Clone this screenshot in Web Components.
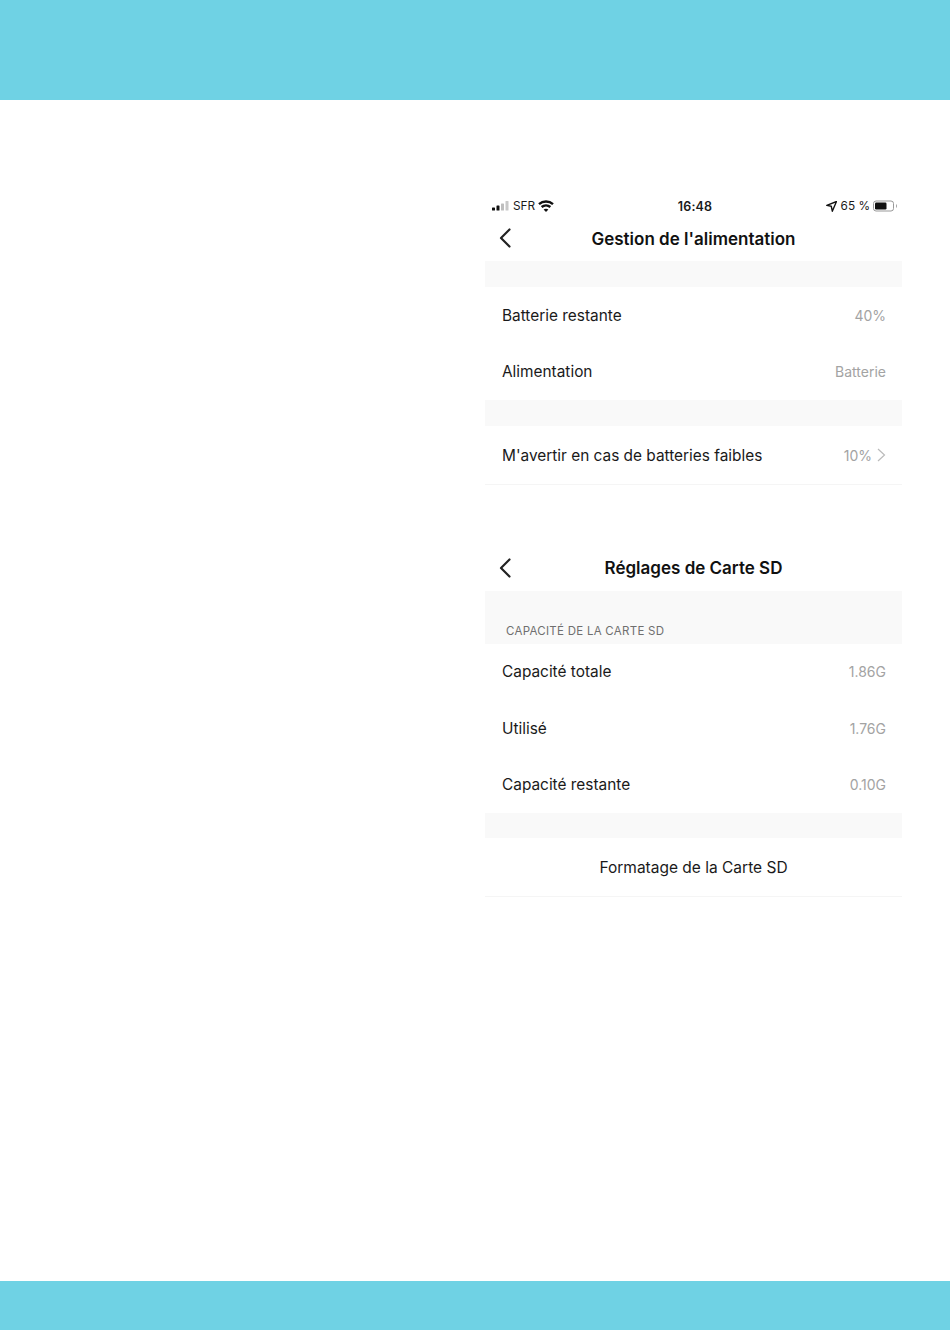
<!DOCTYPE html>
<html lang="fr"><head><meta charset="utf-8"><title>Réglages</title>
<style>html,body{margin:0;padding:0;background:#fff}body{font-family:Inter,"Liberation Sans",sans-serif}</style>
</head><body>
<template id="t-page"><style>
:host{display:grid;grid-template-rows:100px 1181px 49px;width:950px;height:1330px;background:#fff}
.band{background:#6fd2e4}
main{padding:97px 48px 0 485px;display:flex;flex-direction:column}
</style><div class="band"></div><main><slot></slot></main><div class="band"></div></template>

<template id="t-status"><style>
:host{display:grid;grid-template-columns:1fr auto 1fr;align-items:center;height:18px;padding:0 4px 0 7px;font-size:11.8px;color:#1a1a1a}
.l,.r{display:flex;align-items:center}.l{gap:3px}.r{justify-content:flex-end;gap:3px}
.t{font-weight:600;font-size:12.5px;letter-spacing:.15px}
svg{display:block}
</style>
<div class="l"><svg width="18" height="10" viewBox="0 0 18 10"><rect x="0" y="6.5" width="3" height="3" rx=".6" fill="#111"/><rect x="4.5" y="4.5" width="3" height="5" rx=".6" fill="#111"/><rect x="9" y="2.5" width="3" height="7" rx=".6" fill="#bdbdbd"/><rect x="13.5" y="0" width="3" height="9.5" rx=".6" fill="#c8c8c8"/></svg><span>SFR</span><svg width="16" height="12" viewBox="0 0 16 12" fill="none" stroke="#111" stroke-width="2.4"><path d="M1 4.2C5 .6 11 .6 15 4.2"/><path d="M3.6 7c2.6-2.2 6.2-2.2 8.8 0"/><path d="M8 12 5.6 9.4c1.4-1 3.4-1 4.8 0z" fill="#111" stroke="none"/></svg></div>
<div class="t">16:48</div>
<div class="r"><svg width="11" height="11" viewBox="0 0 11 11"><path d="M10.5.5 .8 4.4l4.5.9 1 4.9z" fill="none" stroke="#111" stroke-width="1.4" stroke-linejoin="round"/></svg><span style="margin-left:1px">65 %</span><svg width="25" height="12" viewBox="0 0 25 12"><rect x=".5" y="1" width="20" height="10" rx="2.5" fill="#fff" stroke="#999"/><rect x="2" y="2.5" width="11.5" height="7" rx="1.2" fill="#111"/><rect x="23" y="4.5" width="1" height="3" fill="#aaa"/></svg></div></template>

<template id="t-nav"><style>
:host{display:grid;grid-template-columns:44px 1fr 44px;align-items:center;height:46px;font-weight:600;font-size:17px;color:#111;text-align:center}
svg{display:block;margin-left:14px}
.x{padding-top:1px}
</style><svg width="12" height="20" viewBox="0 0 12 20" fill="none" stroke="#222" stroke-width="2.2" stroke-linecap="round" stroke-linejoin="round"><path d="M10.5 1.5 2 10l8.5 8.5"/></svg><div class="x"><slot></slot></div><span></span></template>

<template id="t-gap"><style>
:host{display:flex;align-items:flex-end;background:#f9f9f9;height:var(--h,26px);box-sizing:border-box;font-size:11.5px;letter-spacing:.27px;color:#6f6f6f;padding:0 0 6px 21px}
</style><slot></slot></template>

<template id="t-row"><style>
:host{display:flex;justify-content:space-between;align-items:center;height:var(--h,56.4px);box-sizing:border-box;padding:var(--pt,0) 16px 0 17px;font-size:15.4px;color:#1a1a1a}
.v{display:flex;align-items:center;gap:5px;font-size:14px;color:#a3a3a3}
</style><span><slot></slot></span><span class="v"><slot name="value"></slot></span></template>

<template id="t-action"><style>
:host{display:flex;justify-content:center;align-items:center;height:59px;box-sizing:border-box;padding-top:2px;font-size:15.5px;color:#1a1a1a;border-bottom:1px solid #f5f5f5}
</style><slot></slot></template>

<app-page>
<status-bar></status-bar>
<nav-bar>Gestion de l'alimentation</nav-bar>
<gap-band></gap-band>
<set-row>Batterie restante<span slot="value">40%</span></set-row>
<set-row>Alimentation<span slot="value">Batterie</span></set-row>
<gap-band></gap-band>
<set-row style="--h:58px;--pt:1px;border-bottom:1px solid #f5f5f5;box-sizing:border-box;height:59px">M'avertir en cas de batteries faibles<span slot="value">10%</span><svg slot="value" width="9" height="14" viewBox="0 0 9 14" fill="none" stroke="#bbb" stroke-width="1.2"><path d="M1 1l6.5 6L1 13"/></svg></set-row>
<div style="height:60px"></div>
<nav-bar>Réglages de Carte SD</nav-bar>
<gap-band style="--h:53px">CAPACITÉ DE LA CARTE SD</gap-band>
<set-row>Capacité totale<span slot="value">1.86G</span></set-row>
<set-row>Utilisé<span slot="value">1.76G</span></set-row>
<set-row>Capacité restante<span slot="value">0.10G</span></set-row>
<gap-band style="--h:25px"></gap-band>
<action-row>Formatage de la Carte SD</action-row>
</app-page>
<script>
const reg=(n,t)=>customElements.define(n,class extends HTMLElement{constructor(){super();this.attachShadow({mode:'open'}).appendChild(document.getElementById(t).content.cloneNode(true))}});
reg('app-page','t-page');reg('status-bar','t-status');reg('nav-bar','t-nav');reg('gap-band','t-gap');reg('set-row','t-row');reg('action-row','t-action');
</script>
</body></html>
